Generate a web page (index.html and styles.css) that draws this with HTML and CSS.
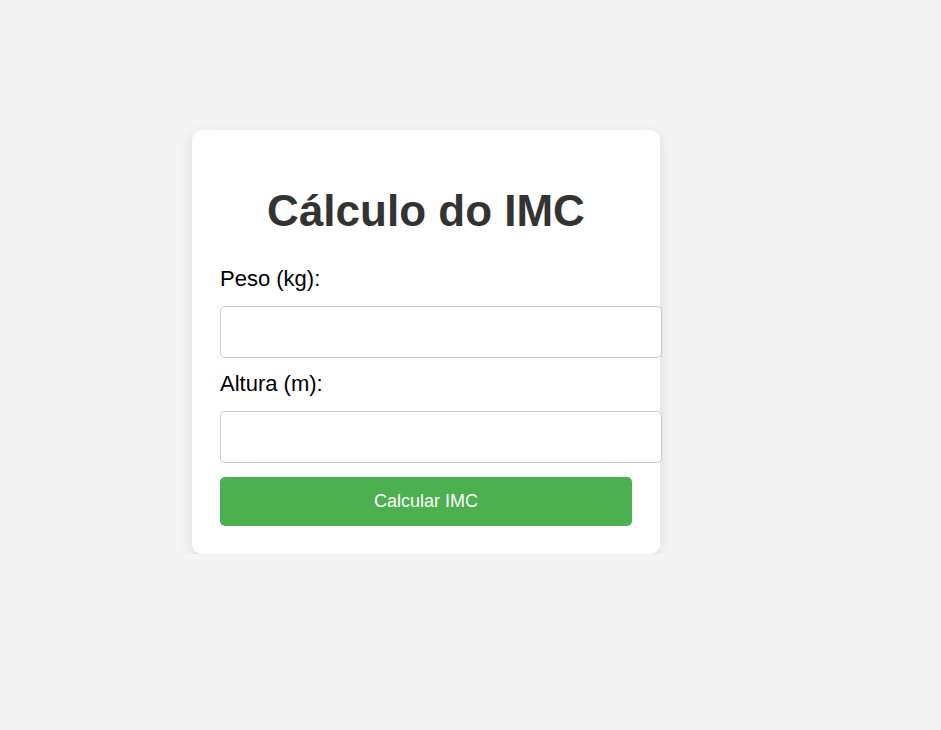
FILE: index.html
```html
<!DOCTYPE html>
<html lang="pt-BR">
<head>
  <meta charset="UTF-8" />
  <meta name="viewport" content="width=device-width, initial-scale=1.0"/>
  <title>Cálculo do IMC</title>
  <link rel="stylesheet" href="styles.css">
</head>
<body>

  <div class="container">
    <h1>Cálculo do IMC</h1>

    <label for="peso">Peso (kg):</label>
    <input type="number" id="peso" step="0.1">

    <label for="altura">Altura (m):</label>
    <input type="number" id="altura" step="0.01">

    <button onclick="calcularIMC()">Calcular IMC</button>

    <div class="resultado" id="resultado"></div>
  </div>

  <script>
    function calcularIMC() {
      const peso = parseFloat(document.getElementById('peso').value);
      const altura = parseFloat(document.getElementById('altura').value);
      const resultado = document.getElementById('resultado');

      if (!peso || !altura) {
        resultado.textContent = 'Preencha peso e altura.';
        return;
      }

      const imc = peso / (altura * altura);
      resultado.textContent = `Seu IMC é ${imc.toFixed(2)}`;
    }
  </script>

</body>
</html>
```

FILE: styles.css
```css
body {
  margin: 0;
  background: #f4f4f4;
  font-family: Arial, 'Liberation Sans', sans-serif;
}

.container {
  background: #fff;
  width: 412px;
  padding: 28px;
  margin: 130px 0 0 192px;
  border-radius: 10px;
  box-shadow: 0 4px 15px rgba(0,0,0,0.1);
}

h1 {
  font-size: 44px;
  color: #333;
  text-align: center;
  margin: 28px 0 30px;
}

label {
  display: block;
  font-size: 22px;
  color: #000;
  margin-bottom: 14px;
}

input {
  display: block;
  width: 100%;
  height: 22px;
  padding: 14px;
  font-size: 18px;
  border: 1px solid #ccc;
  border-radius: 5px;
  margin: 0 0 13px;
}

button {
  display: block;
  width: 100%;
  height: 49px;
  margin-top: 14px;
  background: #4caf50;
  color: #fff;
  border: none;
  border-radius: 5px;
  font-family: inherit;
  font-size: 18px;
  cursor: pointer;
}

button:hover {
  background: #45a049;
}

.resultado:empty {
  display: none;
}

.resultado {
  margin-top: 20px;
  font-size: 20px;
  text-align: center;
}
```
